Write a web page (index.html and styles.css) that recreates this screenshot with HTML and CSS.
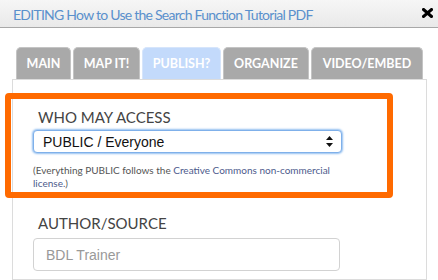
FILE: index.html
```html
<!DOCTYPE html>
<html lang="en">
<head>
    <meta charset="UTF-8">
    <title>Editing</title>
    <link rel="stylesheet" href="styles.css">
</head>
<body>
    <div class="header">
        <span class="title">EDITING How to Use the Search Function Tutorial PDF</span>
        <svg class="close" width="11" height="10" viewBox="0 0 11 10">
            <path d="M1.5 1.5 L9.5 8.5 M9.5 1.5 L1.5 8.5" stroke="#000" stroke-width="3" stroke-linecap="square"/>
        </svg>
    </div>

    <ul class="tabs">
        <li class="tab tab-main">MAIN</li>
        <li class="tab tab-map">MAP IT!</li>
        <li class="tab tab-publish active">PUBLISH?</li>
        <li class="tab tab-organize">ORGANIZE</li>
        <li class="tab tab-video">VIDEO/EMBED</li>
    </ul>

    <div class="panel">
        <div class="access">
            <label class="field-label">WHO MAY ACCESS</label>
            <div class="select-wrap">
                <select class="select">
                    <option>PUBLIC / Everyone</option>
                </select>
                <svg class="arrows" width="7" height="11" viewBox="0 0 7 11">
                    <path d="M3.5 0 L7 4 L0 4 Z M0 7 L7 7 L3.5 11 Z" fill="#111"/>
                </svg>
            </div>
            <p class="note">(Everything PUBLIC follows the <a href="#">Creative Commons non-commercial license.</a>)</p>
        </div>

        <div class="form-group">
            <label class="field-label">AUTHOR/SOURCE</label>
            <input type="text" class="input" placeholder="BDL Trainer">
        </div>
    </div>
</body>
</html>
```

FILE: styles.css
```css
* {
    margin: 0;
    padding: 0;
    box-sizing: border-box;
}

body {
    background: #fff;
    font-family: Lato, "Open Sans", sans-serif;
    overflow: hidden;
}

.header {
    height: 28px;
    display: flex;
    align-items: center;
    justify-content: space-between;
    padding: 0 5px 0 13px;
    background: linear-gradient(#f6f6f6, #e9e9e9);
    border-bottom: 1px solid #a8a8a8;
}

.title {
    font-size: 14px;
    color: #5a90cc;
    letter-spacing: -0.75px;
    margin-top: 1px;
}

.close {
    margin-top: -2px;
}

.tabs {
    list-style: none;
    display: flex;
    gap: 2px;
    margin: 19px 0 0 16px;
}

.tab {
    height: 32px;
    line-height: 32px;
    text-align: center;
    background: #a9a9a9;
    border: 1px solid #c4c4c4;
    border-bottom: none;
    border-radius: 5px 5px 0 0;
    color: #fff;
    font-size: 12.5px;
    font-weight: bold;
}

.tab-main { width: 55px; }
.tab-map { width: 67px; }
.tab-publish { width: 79px; }
.tab-organize { width: 86px; }
.tab-video { width: 112px; }

.tab.active {
    background: #c3dafb;
    border-color: #d6e5fb;
}

.panel {
    margin: 0 11px 0 12px;
    border: 1px solid #dcdcdc;
    padding: 13px 20px 0;
    height: 201px;
}

.access {
    margin: 0 13px 0 -28px;
    border: 6px solid #ff6a00;
    border-radius: 4px;
    padding: 9px 0 2px 22px;
}

.field-label {
    display: block;
    padding-left: 5px;
    font-size: 15px;
    line-height: 18px;
    color: #444;
}

.select-wrap {
    position: relative;
    width: 309px;
    margin-top: 4px;
}

.select {
    appearance: none;
    -webkit-appearance: none;
    width: 100%;
    height: 23px;
    padding: 0 0 0 9px;
    font-family: "Liberation Sans", Arial, sans-serif;
    font-size: 14px;
    color: #111;
    background: #fff;
    border: 1px solid #7fb0ea;
    border-radius: 4px;
    box-shadow: 0 0 2px 1px #93bff0;
    outline: none;
}

.arrows {
    position: absolute;
    right: 9px;
    top: 6px;
}

.note {
    margin-top: 11px;
    width: 312px;
    font-size: 10px;
    line-height: 13px;
    color: #555;
}

.note a {
    color: #4d5a8c;
    text-decoration: none;
}

.form-group {
    margin-top: 16px;
}

.form-group .input {
    display: block;
    margin-top: 6px;
    width: 307px;
    height: 33px;
    padding: 0 12px;
    font-family: "Liberation Sans", Arial, sans-serif;
    font-size: 14px;
    border: 1px solid #d2d2d2;
    border-radius: 4px;
}

.input::placeholder {
    color: #999;
}
```
